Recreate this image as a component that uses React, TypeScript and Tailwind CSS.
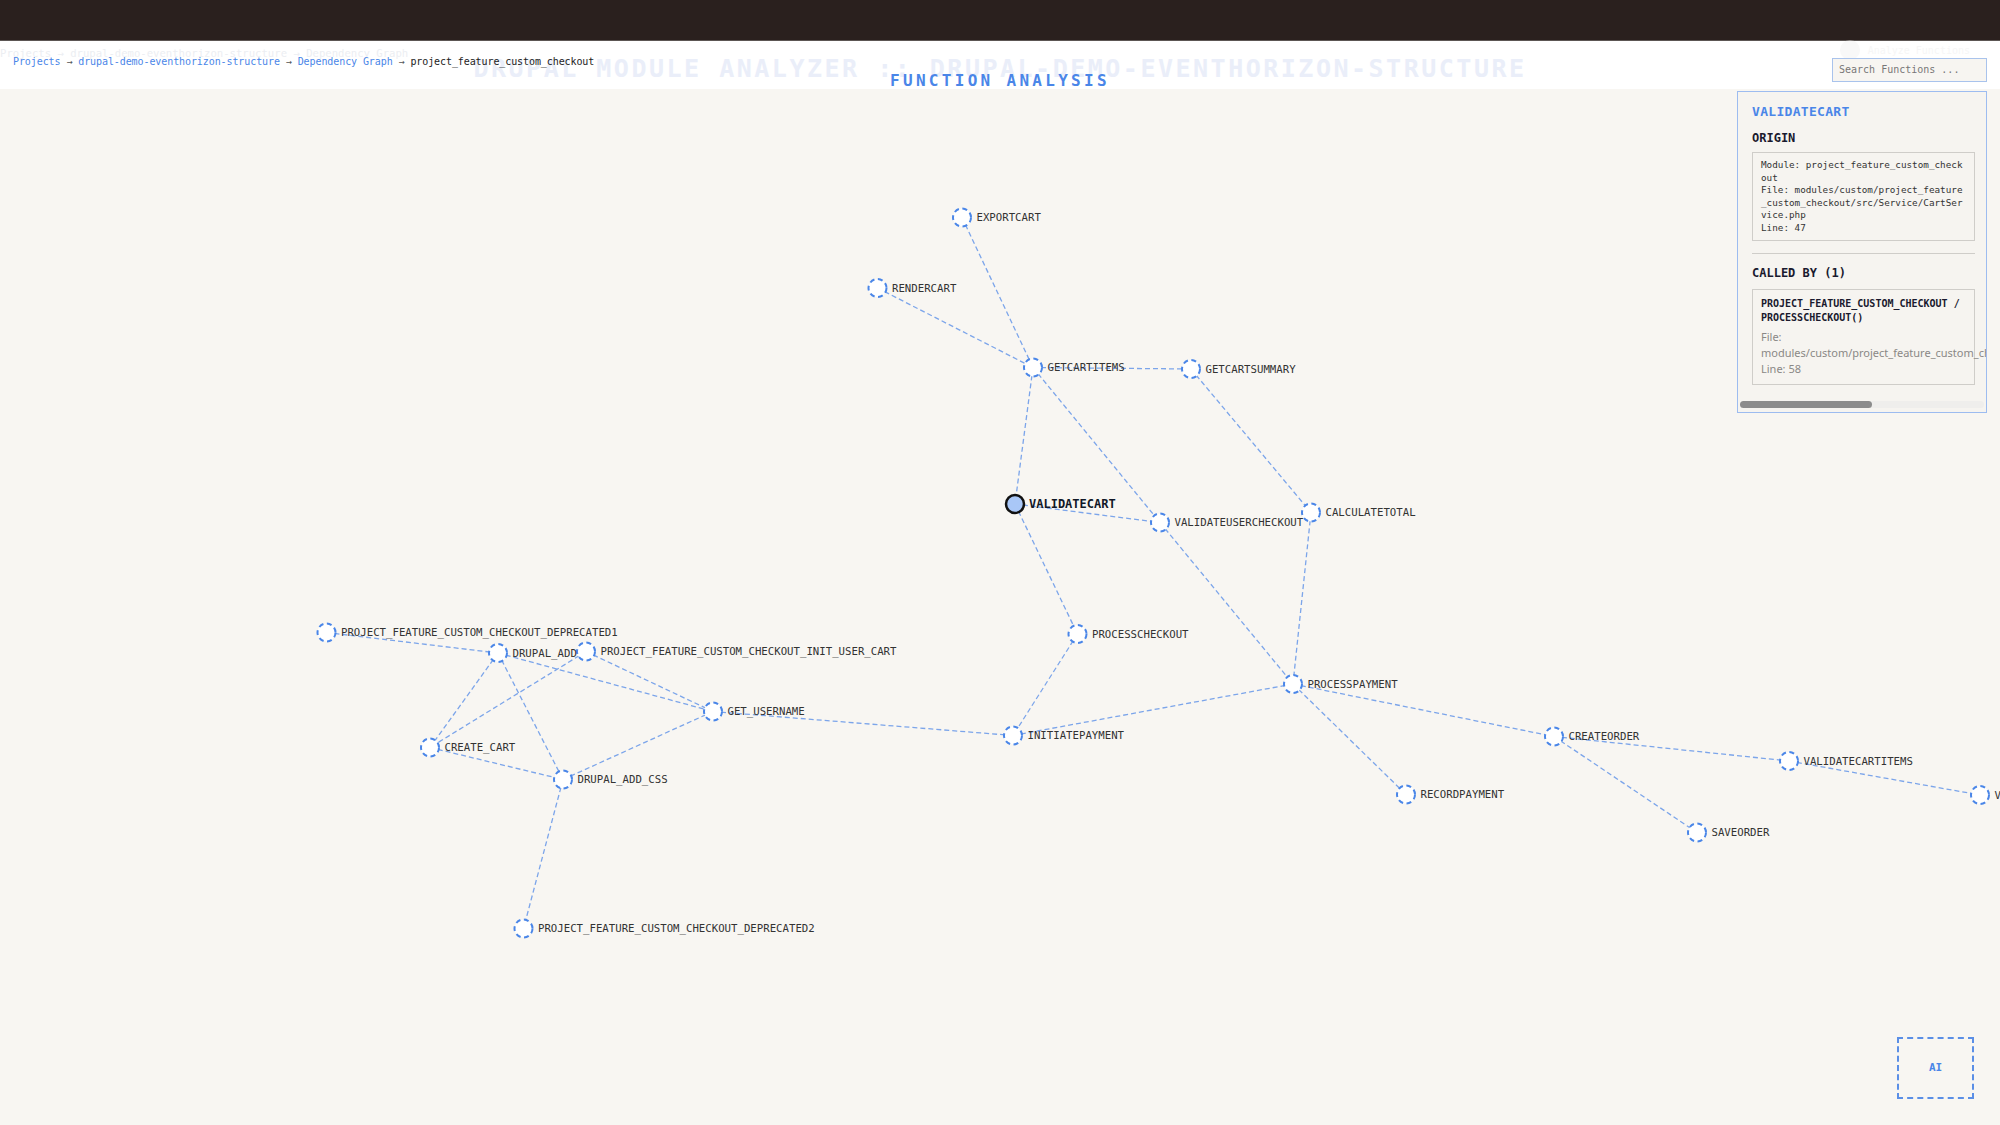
import React from "react";

type GraphNode = { id: string; x: number; y: number; active?: boolean };

const nodes: GraphNode[] = [
  { id: "EXPORTCART", x: 962, y: 217.5 },
  { id: "RENDERCART", x: 877.5, y: 288 },
  { id: "GETCARTITEMS", x: 1033, y: 367.5 },
  { id: "GETCARTSUMMARY", x: 1191, y: 369 },
  { id: "VALIDATECART", x: 1015, y: 504, active: true },
  { id: "VALIDATEUSERCHECKOUT", x: 1160, y: 522.5 },
  { id: "CALCULATETOTAL", x: 1311, y: 512.5 },
  { id: "PROCESSCHECKOUT", x: 1077.5, y: 634 },
  { id: "INITIATEPAYMENT", x: 1013, y: 735.5 },
  { id: "PROCESSPAYMENT", x: 1293, y: 684 },
  { id: "CREATEORDER", x: 1554, y: 736.5 },
  { id: "VALIDATECARTITEMS", x: 1789, y: 761 },
  { id: "VALIDATESTOCK", x: 1980, y: 795 },
  { id: "RECORDPAYMENT", x: 1406, y: 794.5 },
  { id: "SAVEORDER", x: 1697, y: 832.5 },
  { id: "PROJECT_FEATURE_CUSTOM_CHECKOUT_DEPRECATED1", x: 326.5, y: 632.5 },
  { id: "DRUPAL_ADD", x: 498, y: 653 },
  { id: "PROJECT_FEATURE_CUSTOM_CHECKOUT_INIT_USER_CART", x: 586, y: 651.5 },
  { id: "GET_USERNAME", x: 713, y: 711.5 },
  { id: "CREATE_CART", x: 430, y: 747.5 },
  { id: "DRUPAL_ADD_CSS", x: 563, y: 779.5 },
  { id: "PROJECT_FEATURE_CUSTOM_CHECKOUT_DEPRECATED2", x: 523.5, y: 928.5 },
];

const edges: [string, string][] = [
  ["EXPORTCART", "GETCARTITEMS"],
  ["RENDERCART", "GETCARTITEMS"],
  ["GETCARTITEMS", "GETCARTSUMMARY"],
  ["GETCARTITEMS", "VALIDATECART"],
  ["GETCARTITEMS", "VALIDATEUSERCHECKOUT"],
  ["VALIDATEUSERCHECKOUT", "PROCESSPAYMENT"],
  ["GETCARTSUMMARY", "CALCULATETOTAL"],
  ["VALIDATECART", "VALIDATEUSERCHECKOUT"],
  ["VALIDATECART", "PROCESSCHECKOUT"],
  ["CALCULATETOTAL", "PROCESSPAYMENT"],
  ["PROCESSCHECKOUT", "INITIATEPAYMENT"],
  ["INITIATEPAYMENT", "PROCESSPAYMENT"],
  ["GET_USERNAME", "INITIATEPAYMENT"],
  ["PROCESSPAYMENT", "CREATEORDER"],
  ["PROCESSPAYMENT", "RECORDPAYMENT"],
  ["CREATEORDER", "VALIDATECARTITEMS"],
  ["CREATEORDER", "SAVEORDER"],
  ["VALIDATECARTITEMS", "VALIDATESTOCK"],
  ["PROJECT_FEATURE_CUSTOM_CHECKOUT_DEPRECATED1", "DRUPAL_ADD"],
  ["DRUPAL_ADD", "GET_USERNAME"],
  ["DRUPAL_ADD", "CREATE_CART"],
  ["DRUPAL_ADD", "DRUPAL_ADD_CSS"],
  ["PROJECT_FEATURE_CUSTOM_CHECKOUT_INIT_USER_CART", "GET_USERNAME"],
  ["PROJECT_FEATURE_CUSTOM_CHECKOUT_INIT_USER_CART", "CREATE_CART"],
  ["CREATE_CART", "DRUPAL_ADD_CSS"],
  ["DRUPAL_ADD_CSS", "GET_USERNAME"],
  ["DRUPAL_ADD_CSS", "PROJECT_FEATURE_CUSTOM_CHECKOUT_DEPRECATED2"],
];

const byId = Object.fromEntries(nodes.map((n) => [n.id, n]));

function Graph() {
  return (
    <svg
      className="absolute inset-0"
      width={2000}
      height={1036}
      viewBox="0 89 2000 1036"
      style={{ fontFamily: '"DejaVu Sans Mono", monospace' }}
    >
      {edges.map(([a, b]) => (
        <line
          key={a + b}
          x1={byId[a].x}
          y1={byId[a].y}
          x2={byId[b].x}
          y2={byId[b].y}
          stroke="#7ca5ea"
          strokeWidth={1.3}
          strokeDasharray="5 3"
        />
      ))}
      {nodes.map((n) =>
        n.active ? (
          <circle key={n.id} cx={n.x} cy={n.y} r={9} fill="#a9c7f7" stroke="#111" strokeWidth={2.5} />
        ) : (
          <circle
            key={n.id}
            cx={n.x}
            cy={n.y}
            r={9}
            fill="#fff"
            stroke="#4a86e8"
            strokeWidth={2}
            strokeDasharray="5 3.5"
          />
        )
      )}
      {nodes.map((n) => (
        <text
          key={n.id + "-l"}
          x={n.x + (n.active ? 14 : 14.5)}
          y={n.y}
          dominantBaseline="central"
          fontSize={n.active ? 12 : 10.7}
          fontWeight={n.active ? 700 : 400}
          fill={n.active ? "#111827" : "#333"}
        >
          {n.id}
        </text>
      ))}
    </svg>
  );
}

function DetailsPanel() {
  return (
    <aside className="absolute top-[2px] right-[13px] w-[250px] h-[322px] border border-[#9dbcf0] bg-[#f6f4f0] overflow-hidden">
      <div className="pl-[14px] pr-[11px] pt-[12px]">
        <h2 className="text-[13px] leading-[16px] font-bold tracking-[0.3px] text-[#4a86e8]">VALIDATECART</h2>

        <h3 className="mt-[10px] text-[12px] leading-[16px] font-bold text-[#1a1a2e]">ORIGIN</h3>
        <div className="mt-[6px] border border-[#cfcdc9] px-[8px] py-[6px] text-[9.3px] leading-[12.5px] text-[#333]">
          <div>Module: project_feature_custom_check</div>
          <div>out</div>
          <div>File: modules/custom/project_feature</div>
          <div>_custom_checkout/src/Service/CartSer</div>
          <div>vice.php</div>
          <div>Line: 47</div>
        </div>

        <div className="mt-[12px] border-t border-[#cfcdc9]" />

        <h3 className="mt-[11px] text-[12px] leading-[16px] font-bold text-[#1a1a2e]">CALLED BY (1)</h3>
        <div className="mt-[8px] border border-[#cfcdc9] px-[8px] py-[7px]">
          <div className="text-[10px] leading-[14px] font-bold text-[#1a1a2e]">
            <div>PROJECT_FEATURE_CUSTOM_CHECKOUT /</div>
            <div>PROCESSCHECKOUT()</div>
          </div>
          <div className="mt-[4px] text-[11px] leading-[16px] text-[#8a8886] font-['Noto_Sans',sans-serif]">
            <div>File:</div>
            <div className="whitespace-nowrap">modules/custom/project_feature_custom_checkout/src/Controller/CheckoutController.php</div>
            <div>Line: 58</div>
          </div>
        </div>
      </div>

      {/* horizontal scrollbar */}
      <div className="absolute left-[2px] right-[2px] bottom-[4px] h-[7px] rounded-full bg-[#efeeec]">
        <div className="w-[132px] h-full rounded-full bg-[#8c8c8c]" />
      </div>
    </aside>
  );
}

export default function App() {
  return (
    <div className="w-[2000px] h-[1125px] overflow-hidden bg-[#f8f6f2] font-['DejaVu_Sans_Mono',monospace]">
      <div className="h-[41px] bg-[#2a201e] border-b border-[#5c5654]" />

      <header className="relative h-[48px] bg-white flex items-start justify-between">
        {/* faint ghost of previous breadcrumb */}
        <div className="absolute left-0 top-[5px] text-[10.6px] leading-[14px] text-[#eceef2] whitespace-nowrap">
          Projects → drupal-demo-eventhorizon-structure → Dependency Graph
        </div>

        <nav className="relative z-10 pl-[13px] pt-[14px] text-[10px] leading-[14px] tracking-[-0.09px] whitespace-nowrap">
          <span className="text-[#4a86e8]">Projects</span>
          <span className="text-[#555]"> → </span>
          <span className="text-[#4a86e8]">drupal-demo-eventhorizon-structure</span>
          <span className="text-[#555]"> → </span>
          <span className="text-[#4a86e8]">Dependency Graph</span>
          <span className="text-[#555]"> → </span>
          <span className="text-[#222]">project_feature_custom_checkout</span>
        </nav>

        <div className="absolute left-0 right-0 top-[13px] text-center text-[25px] leading-[30px] font-bold tracking-[2.5px] text-[#eaeef9] whitespace-nowrap">
          DRUPAL MODULE ANALYZER :: DRUPAL-DEMO-EVENTHORIZON-STRUCTURE
        </div>
        <div className="absolute left-0 right-0 top-[30px] text-center text-[16px] leading-[20px] font-bold tracking-[3.3px] text-[#4a86e8] whitespace-nowrap">
          FUNCTION ANALYSIS
        </div>

        <div className="relative z-10 pr-[13px] pt-[15px]">
          <div className="absolute right-[30px] top-[-1px] flex items-center gap-[8px] opacity-40">
            <span className="w-[20px] h-[20px] rounded-full bg-[#eeeeee]" />
            <span className="text-[10px] text-[#eaeaea]">Analyze Functions</span>
          </div>
          <input
            placeholder="Search Functions ..."
            className="relative w-[155px] h-[24px] border border-[#a9c3ec] bg-[#f7f5f1] pl-[6px] text-[10px] text-[#333] placeholder:text-[#777] outline-none"
          />
        </div>
      </header>

      <main className="relative h-[1036px]">
        <Graph />
        <DetailsPanel />
        <button className="absolute right-[26px] bottom-[26px] w-[77px] h-[62px] border-2 border-dashed border-[#5b8fe6] flex items-center justify-center text-[11px] font-bold text-[#4a86e8]">
          AI
        </button>
      </main>
    </div>
  );
}
